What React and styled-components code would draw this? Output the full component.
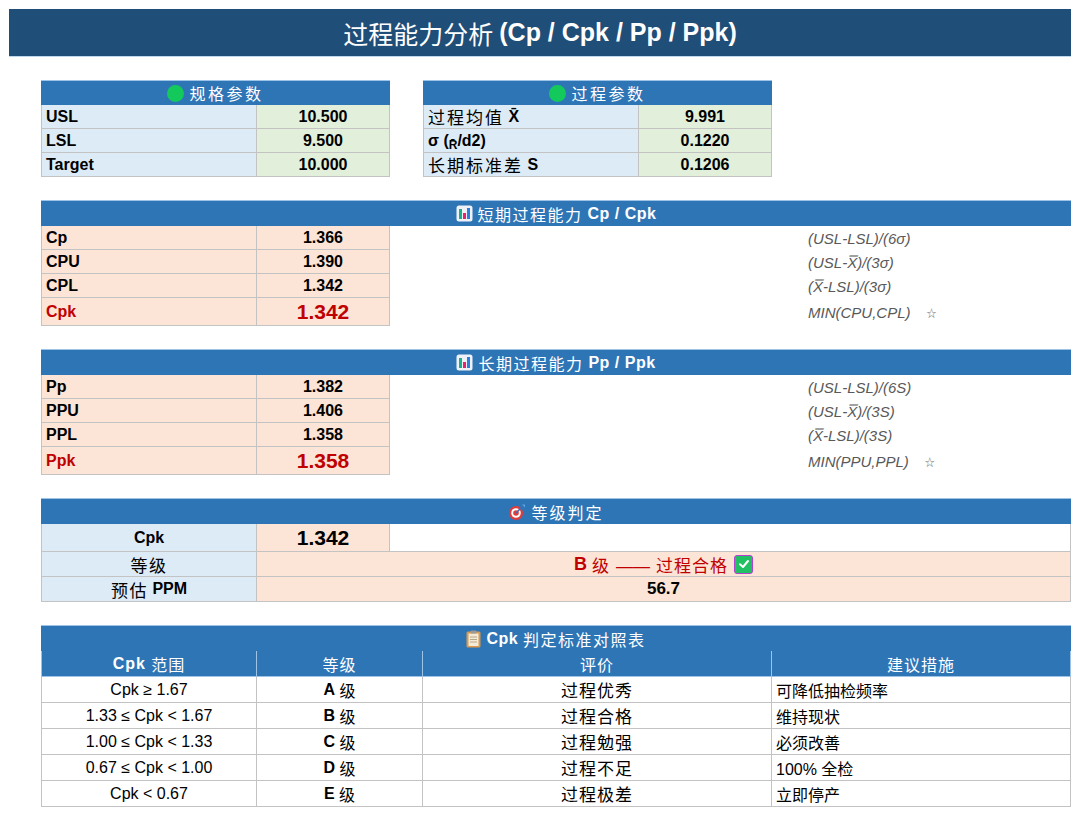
import styled, { createGlobalStyle } from 'styled-components';

const GlobalStyle = createGlobalStyle`
  body {
    margin: 0;
    background: #ffffff;
    font-family: 'Liberation Sans', 'Noto Sans CJK SC', sans-serif;
    color: #000000;
  }
`;

const BLUE = '#ddebf7';
const GREEN = '#e2efda';
const PEACH = '#fce4d6';
const RED = '#c00000';

const Page = styled.div`
  padding: 9px 9px 20px 9px;
  width: 1062px;
`;

const TitleBar = styled.div`
  height: 47px;
  background: #1f4e79;
  color: #ffffff;
  display: flex;
  align-items: center;
  justify-content: center;
  font-size: 25px;
  border-bottom: 1px solid #bdd7ee;

  b {
    font-weight: 700;
    margin-left: 6px;
  }
`;

const Block = styled.div`
  margin: ${(p) => p.$top || 23}px 0 0 32px;
  display: grid;
  grid-template-columns: 216px 133px 33px 216px 133px 299px;
`;

const Band = styled.div`
  grid-column: ${(p) => p.$span || '1 / -1'};
  height: ${(p) => p.$h || 26}px;
  box-sizing: border-box;
  background: #2e75b6;
  border-top: 1px solid #9dc3e6;
  color: #ffffff;
  display: flex;
  align-items: center;
  justify-content: center;
  gap: 5px;
  font-size: 16px;
  letter-spacing: ${(p) => p.$spacing || 1.5}px;

  b {
    font-weight: 700;
    letter-spacing: 0.5px;
  }
`;

const Cell = styled.div`
  grid-column: ${(p) => p.$span || 'auto'};
  height: ${(p) => p.$h || 24}px;
  box-sizing: border-box;
  display: flex;
  align-items: center;
  justify-content: ${(p) => (p.$left ? 'flex-start' : 'center')};
  padding: 0 4px;
  background: ${(p) => p.$bg || '#ffffff'};
  border-right: 1px solid #c3c3c3;
  border-bottom: 1px solid #c3c3c3;
  border-left: ${(p) => (p.$first ? '1px solid #c3c3c3' : 'none')};
  font-weight: ${(p) => (p.$bold ? 700 : 400)};
  font-size: ${(p) => p.$size || 16}px;
  color: ${(p) => p.$color || '#000000'};
  white-space: nowrap;

  b {
    font-weight: 700;
  }
`;

const HeadCell = styled(Cell)`
  background: #2e75b6;
  color: #ffffff;
  border-right: 1px solid #9dc3e6;
  border-bottom: 1px solid #9dc3e6;
  border-left: ${(p) => (p.$first ? '1px solid #9dc3e6' : 'none')};
  letter-spacing: 1px;
`;

const Zh = styled.span`
  font-size: 17px;
  letter-spacing: ${(p) => p.$spacing || 1.5}px;
`;

const Dash = styled.span`
  letter-spacing: 0;
  margin: 0 6px;
`;

const Blank = styled.div`
  grid-column: ${(p) => p.$span || 'auto'};
  height: ${(p) => p.$h || 24}px;
`;

const Formula = styled.div`
  grid-column: 6;
  height: ${(p) => p.$h || 24}px;
  display: flex;
  align-items: center;
  padding-left: 36px;
  font-style: italic;
  font-size: 15px;
  color: #595959;
  white-space: nowrap;
`;

const Star = styled.span`
  font-style: normal;
  font-size: 10px;
  margin-left: 16px;
  color: #777777;
`;

const Dot = styled.span`
  width: 17px;
  height: 17px;
  border-radius: 50%;
  background: #14c95c;
  display: inline-block;
`;

const Sub = styled.span`
  font-size: 12px;
  position: relative;
  top: 4px;
`;

const Check = styled.span`
  display: inline-flex;
  align-items: center;
  justify-content: center;
  width: 17px;
  height: 17px;
  margin-left: 6px;
  border-radius: 3px;
  background: #21c063;
  border: 1.5px solid #b53fcf;
`;

const BarIcon = () => (
  <svg width="17" height="17" viewBox="0 0 17 17">
    <rect x="0.5" y="0.5" width="16" height="16" rx="2.5" fill="#eef2f6" />
    <rect x="3" y="4" width="3" height="10" fill="#1aae8c" />
    <rect x="7" y="8" width="3" height="6" fill="#e8226f" />
    <rect x="11" y="3" width="3" height="11" fill="#2b7de0" />
  </svg>
);

const TargetIcon = () => (
  <svg width="18" height="18" viewBox="0 0 18 18">
    <circle cx="8" cy="10" r="7" fill="#e23b3b" />
    <circle cx="8" cy="10" r="4.8" fill="#ffffff" />
    <circle cx="8" cy="10" r="2.8" fill="#e23b3b" />
    <line x1="8" y1="10" x2="15" y2="3" stroke="#3b6fb6" strokeWidth="1.6" />
    <path d="M14 1.5 L17 1.5 L17 4.5 L15.5 3 Z" fill="#58a6e8" />
  </svg>
);

const ClipIcon = () => (
  <svg width="15" height="18" viewBox="0 0 15 18">
    <rect x="0.5" y="1.5" width="14" height="16" rx="1.5" fill="#d99a4e" />
    <rect x="2.5" y="3.5" width="10" height="12.5" fill="#f4ead8" />
    <rect x="4.5" y="0.5" width="6" height="3" rx="1" fill="#9a9a9a" />
    <line x1="4" y1="7" x2="11" y2="7" stroke="#b9a78a" strokeWidth="1" />
    <line x1="4" y1="9.5" x2="11" y2="9.5" stroke="#b9a78a" strokeWidth="1" />
    <line x1="4" y1="12" x2="11" y2="12" stroke="#b9a78a" strokeWidth="1" />
  </svg>
);

const shortRows = [
  { label: 'Cp', value: '1.366', formula: '(USL-LSL)/(6σ)' },
  { label: 'CPU', value: '1.390', formula: '(USL-X̿)/(3σ)' },
  { label: 'CPL', value: '1.342', formula: '(X̿-LSL)/(3σ)' },
  { label: 'Cpk', value: '1.342', formula: 'MIN(CPU,CPL)', key: true },
];

const longRows = [
  { label: 'Pp', value: '1.382', formula: '(USL-LSL)/(6S)' },
  { label: 'PPU', value: '1.406', formula: '(USL-X̿)/(3S)' },
  { label: 'PPL', value: '1.358', formula: '(X̿-LSL)/(3S)' },
  { label: 'Ppk', value: '1.358', formula: 'MIN(PPU,PPL)', key: true },
];

const grades = [
  { range: 'Cpk ≥ 1.67', grade: 'A', eval: '过程优秀', action: '可降低抽检频率' },
  { range: '1.33 ≤ Cpk < 1.67', grade: 'B', eval: '过程合格', action: '维持现状' },
  { range: '1.00 ≤ Cpk < 1.33', grade: 'C', eval: '过程勉强', action: '必须改善' },
  { range: '0.67 ≤ Cpk < 1.00', grade: 'D', eval: '过程不足', action: '100% 全检' },
  { range: 'Cpk < 0.67', grade: 'E', eval: '过程极差', action: '立即停产' },
];

const CapabilityRows = ({ rows }) =>
  rows.map((r) => {
    const h = r.key ? 28 : 24;
    return [
      <Cell key={r.label + 'l'} $first $left $bold $h={h} $bg={PEACH} $color={r.key ? RED : '#000'}>
        {r.label}
      </Cell>,
      <Cell
        key={r.label + 'v'}
        $bold
        $h={h}
        $bg={PEACH}
        $size={r.key ? 21 : 16}
        $color={r.key ? RED : '#000'}
      >
        {r.value}
      </Cell>,
      <Blank key={r.label + 'b'} $span="3 / 6" $h={h} />,
      <Formula key={r.label + 'f'} $h={h}>
        {r.formula}
        {r.key && <Star>☆</Star>}
      </Formula>,
    ];
  });

const App = () => (
  <Page>
    <GlobalStyle />
    <TitleBar>
      过程能力分析<b>(Cp / Cpk / Pp / Ppk)</b>
    </TitleBar>

    <Block $top={23}>
      <Band $span="1 / 3" $h={25} $spacing={2.5}>
        <Dot /> 规格参数
      </Band>
      <Blank />
      <Band $span="4 / 6" $h={25} $spacing={2.5}>
        <Dot /> 过程参数
      </Band>
      <Blank />

      <Cell $first $left $bold $bg={BLUE}>USL</Cell>
      <Cell $bold $bg={GREEN}>10.500</Cell>
      <Blank />
      <Cell $first $left $bg={BLUE}>
        <Zh $spacing={2}>过程均值</Zh>&nbsp;<b>X̄</b>
      </Cell>
      <Cell $bold $bg={GREEN}>9.991</Cell>
      <Blank />

      <Cell $first $left $bold $bg={BLUE}>LSL</Cell>
      <Cell $bold $bg={GREEN}>9.500</Cell>
      <Blank />
      <Cell $first $left $bold $bg={BLUE}>
        σ (<Sub>R̄</Sub>/d2)
      </Cell>
      <Cell $bold $bg={GREEN}>0.1220</Cell>
      <Blank />

      <Cell $first $left $bold $bg={BLUE}>Target</Cell>
      <Cell $bold $bg={GREEN}>10.000</Cell>
      <Blank />
      <Cell $first $left $bg={BLUE}>
        <Zh $spacing={2}>长期标准差</Zh>&nbsp;<b>S</b>
      </Cell>
      <Cell $bold $bg={GREEN}>0.1206</Cell>
      <Blank />
    </Block>

    <Block>
      <Band>
        <BarIcon /> 短期过程能力 <b>Cp / Cpk</b>
      </Band>
      <CapabilityRows rows={shortRows} />
    </Block>

    <Block>
      <Band>
        <BarIcon /> 长期过程能力 <b>Pp / Ppk</b>
      </Band>
      <CapabilityRows rows={longRows} />
    </Block>

    <Block>
      <Band $spacing={2}>
        <TargetIcon /> 等级判定
      </Band>
      <Cell $first $bold $h={28} $bg={BLUE}>Cpk</Cell>
      <Cell $bold $h={28} $bg={PEACH} $size={21}>1.342</Cell>
      <Cell $span="3 / -1" $h={28} />

      <Cell $first $h={25} $bg={BLUE}>
        <Zh>等级</Zh>
      </Cell>
      <Cell $span="2 / -1" $h={25} $bg={PEACH} $color={RED} $size={18}>
        <b>B</b>&nbsp;
        <Zh $spacing={1}>
          级<Dash>——</Dash>过程合格
        </Zh>
        <Check>
          <svg width="12" height="12" viewBox="0 0 12 12">
            <path d="M2 6.2 L5 9 L10 3" fill="none" stroke="#ffffff" strokeWidth="2" strokeLinecap="round" strokeLinejoin="round" />
          </svg>
        </Check>
      </Cell>

      <Cell $first $h={25} $bg={BLUE}>
        <Zh>预估</Zh>&nbsp;<b>PPM</b>
      </Cell>
      <Cell $span="2 / -1" $h={25} $bg={PEACH} $bold $size={17}>56.7</Cell>
    </Block>

    <Block>
      <Band>
        <ClipIcon /> <b>Cpk</b> 判定标准对照表
      </Band>
      <HeadCell $first $h={26}>
        <b>Cpk</b>&nbsp;范围
      </HeadCell>
      <HeadCell $span="2 / 4" $h={26}>等级</HeadCell>
      <HeadCell $span="4 / 6" $h={26}>评价</HeadCell>
      <HeadCell $h={26}>建议措施</HeadCell>

      {grades.map((g) => [
        <Cell key={g.grade + 'r'} $first $h={26}>{g.range}</Cell>,
        <Cell key={g.grade + 'g'} $span="2 / 4" $h={26}>
          <b>{g.grade}</b>&nbsp;级
        </Cell>,
        <Cell key={g.grade + 'e'} $span="4 / 6" $h={26}>
          <Zh $spacing={1}>{g.eval}</Zh>
        </Cell>,
        <Cell key={g.grade + 'a'} $left $h={26}>{g.action}</Cell>,
      ])}
    </Block>
  </Page>
);

export default App;
